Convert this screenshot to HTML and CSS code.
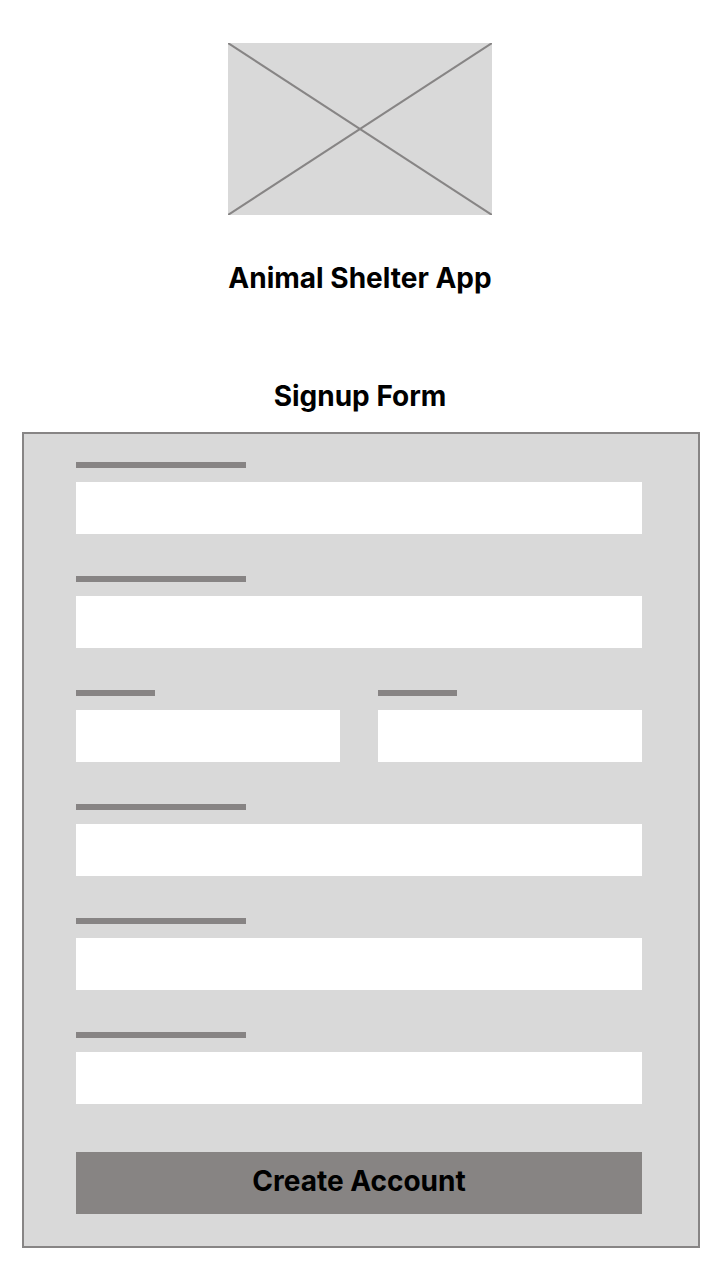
FILE: index.html
```html
<!DOCTYPE html>
<html lang="en">
<head>
<meta charset="utf-8">
<title>Animal Shelter App – Signup</title>
<link rel="stylesheet" href="styles.css">
</head>
<body>
<header class="header">
  <div class="logo">
    <svg viewBox="0 0 264 172" width="264" height="172" preserveAspectRatio="none">
      <rect x="0" y="0" width="264" height="172" fill="#d9d9d9"/>
      <line x1="0" y1="0" x2="264" y2="172" stroke="#878585" stroke-width="2"/>
      <line x1="264" y1="0" x2="0" y2="172" stroke="#878585" stroke-width="2"/>
    </svg>
  </div>
  <h1 class="app-title">Animal Shelter App</h1>
</header>
<main class="main">
  <h2 class="form-title">Signup Form</h2>
  <form class="form">
    <div class="field">
      <span class="label-bar"></span>
      <span class="input"></span>
    </div>
    <div class="field">
      <span class="label-bar"></span>
      <span class="input"></span>
    </div>
    <div class="field-row">
      <div class="field">
        <span class="label-bar short"></span>
        <span class="input"></span>
      </div>
      <div class="field">
        <span class="label-bar short"></span>
        <span class="input"></span>
      </div>
    </div>
    <div class="field">
      <span class="label-bar"></span>
      <span class="input"></span>
    </div>
    <div class="field">
      <span class="label-bar"></span>
      <span class="input"></span>
    </div>
    <div class="field">
      <span class="label-bar"></span>
      <span class="input"></span>
    </div>
    <button type="button" class="submit">Create Account</button>
  </form>
</main>
</body>
</html>
```

FILE: styles.css
```css
* {
  box-sizing: border-box;
}

html, body {
  margin: 0;
  padding: 0;
  background: #ffffff;
}

body {
  font-family: Inter, "Noto Sans", "Liberation Sans", sans-serif;
  color: #000000;
  width: 720px;
}

.header {
  display: flex;
  flex-direction: column;
  align-items: center;
  padding-top: 43px;
}

.logo {
  width: 264px;
  height: 172px;
  display: flex;
}

.logo svg {
  display: block;
}

.app-title {
  margin: 47px 0 0;
  font-size: 28px;
  line-height: 32px;
  font-weight: 700;
  text-align: center;
}

.main {
  display: flex;
  flex-direction: column;
  padding-top: 86px;
}

.form-title {
  margin: 0;
  font-size: 28px;
  line-height: 32px;
  font-weight: 700;
  text-align: center;
}

.form {
  margin: 20px 0 0 22px;
  width: 678px;
  background: #d9d9d9;
  border: 2px solid #878585;
  padding: 28px 56px 32px 52px;
  display: flex;
  flex-direction: column;
  gap: 42px;
}

.field {
  display: flex;
  flex-direction: column;
  gap: 14px;
}

.field-row {
  display: grid;
  grid-template-columns: 264px 264px;
  column-gap: 38px;
}

.label-bar {
  display: block;
  width: 170px;
  height: 6px;
  background: #878484;
}

.label-bar.short {
  width: 79px;
}

.input {
  display: block;
  height: 52px;
  background: #ffffff;
}

.submit {
  margin-top: 6px;
  height: 62px;
  width: 100%;
  border: none;
  background: #878483;
  color: #000000;
  font-family: Inter, "Noto Sans", "Liberation Sans", sans-serif;
  font-size: 28px;
  font-weight: 700;
  line-height: 32px;
  padding: 0 0 4px;
  display: flex;
  align-items: center;
  justify-content: center;
  cursor: pointer;
}
```
